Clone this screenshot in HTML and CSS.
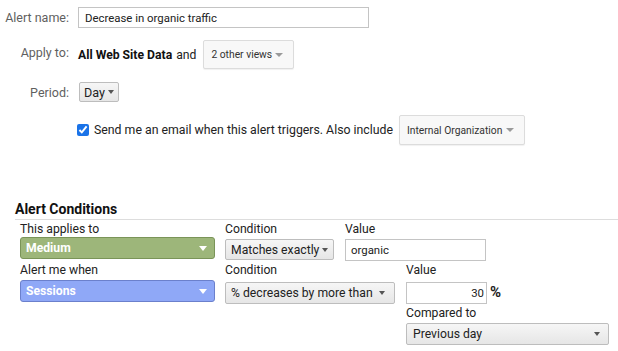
FILE: index.html
```html
<!DOCTYPE html>
<html>
<head>
<meta charset="utf-8">
<link rel="stylesheet" href="styles.css">
</head>
<body>
<div class="top">
  <div class="row r1">
    <div class="lbl">Alert name:</div>
    <div class="txt-input name-input">Decrease in organic traffic</div>
  </div>
  <div class="row r2">
    <div class="lbl">Apply to:</div>
    <span class="strong">All Web Site Data</span><span class="and">and</span>
    <div class="soft-select views"><span>2 other views</span><span class="soft-arrow"></span></div>
  </div>
  <div class="row r3">
    <div class="lbl">Period:</div>
    <div class="btn-select day"><span>Day</span><span class="dark-arrow"></span></div>
  </div>
  <div class="row r4">
    <div class="lbl"></div>
    <input type="checkbox" class="chk" checked>
    <span class="email">Send me an email when this alert triggers. Also include</span>
    <div class="soft-select org"><span>Internal Organization</span><span class="soft-arrow"></span></div>
  </div>
</div>

<div class="cond">
  <div class="cond-title">Alert Conditions</div>
  <div class="cond-row ra">
    <div class="col c1">
      <div class="clbl">This applies to</div>
      <div class="color-select green"><span>Medium</span><span class="white-arrow"></span></div>
    </div>
    <div class="col c2a">
      <div class="clbl">Condition</div>
      <div class="btn-select cbtn"><span>Matches exactly</span><span class="dark-arrow"></span></div>
    </div>
    <div class="col c3a">
      <div class="clbl">Value</div>
      <div class="txt-input val">organic</div>
    </div>
  </div>
  <div class="cond-row rb">
    <div class="col c1">
      <div class="clbl">Alert me when</div>
      <div class="color-select blue"><span>Sessions</span><span class="white-arrow"></span></div>
    </div>
    <div class="col c2b">
      <div class="clbl">Condition</div>
      <div class="btn-select cbtn wide"><span>% decreases by more than</span><span class="dark-arrow"></span></div>
    </div>
    <div class="col c3b">
      <div class="clbl">Value</div>
      <div class="pct-line"><div class="txt-input num">30</div><span class="pct">%</span></div>
      <div class="clbl cmp">Compared to</div>
      <div class="btn-select prev"><span>Previous day</span><span class="dark-arrow"></span></div>
    </div>
  </div>
</div>
</body>
</html>
```

FILE: styles.css
```css
* { box-sizing: border-box; }
body {
  margin: 0;
  font-family: Roboto, "Liberation Sans", Arial, sans-serif;
  font-size: 12.2px;
  color: #222;
  background: #fff;
  width: 618px;
  height: 351px;
  overflow: hidden;
  white-space: nowrap;
}
.top { padding-top: 7px; }
.row { display: flex; align-items: center; }
.lbl {
  width: 70px;
  padding-right: 1px;
  margin-right: 8px;
  text-align: right;
  color: #5f5f5f;
  font-size: 12.5px;
  flex: none;
}
.r1 { height: 21px; }
.r2 { height: 29px; margin-top: 12px; }
.r2 .lbl { margin-top: -4px; }
.r3 { height: 20px; margin-top: 13px; }
.r4 { height: 30px; margin-top: 13px; }
.r4 .lbl { margin-right: 7px; }

.txt-input {
  border: 1px solid #c4c4c4;
  background: #fff;
  display: flex;
  align-items: center;
  font-size: 11.4px;
  color: #222;
}
.name-input { width: 291px; height: 21px; padding-left: 6px; }

.strong { font-weight: bold; color: #111; font-size: 12.2px; }
.and { margin-left: 4px; margin-right: 7px; color: #222; font-size: 12.2px; }

.soft-select {
  display: flex;
  align-items: center;
  justify-content: space-between;
  background: #f8f8f8;
  border: 1px solid #dcdcdc;
  border-radius: 2px;
  box-shadow: 0 1px 1px rgba(0,0,0,0.06);
  font-size: 10.3px;
  color: #333;
  padding: 0 10px 0 7px;
}
.views { width: 91px; height: 29px; }
.org { width: 126px; height: 30px; margin-left: 6px; }
.soft-arrow {
  width: 0; height: 0;
  border-left: 4px solid transparent;
  border-right: 4px solid transparent;
  border-top: 4px solid #9a9a9a;
}

.btn-select {
  display: flex;
  align-items: center;
  justify-content: space-between;
  background: linear-gradient(#f6f6f6, #e6e6e6);
  border: 1px solid #bdbdbd;
  border-radius: 2px;
  color: #222;
  font-size: 12.2px;
  padding: 0 5px 0 5px;
}
.day { width: 40px; height: 20px; margin-left: 1px; font-size: 12.6px; padding-left: 4px; }
.dark-arrow {
  width: 0; height: 0;
  border-left: 3.5px solid transparent;
  border-right: 3.5px solid transparent;
  border-top: 4px solid #555;
  margin-left: 3px;
}

.chk {
  margin: 0;
  width: 12px; height: 12px;
  accent-color: #1a73e8;
  flex: none;
}
.email { margin-left: 5px; color: #222; font-size: 12.3px; }

.cond { margin-top: 54px; margin-left: 15px; }
.cond-title {
  font-weight: bold;
  font-size: 14px;
  color: #111;
  height: 21px;
  line-height: 20px;
  border-bottom: 1px solid #ddd;
}
.cond-row { display: flex; padding-left: 5px; }
.col { display: flex; flex-direction: column; flex: none; }
.clbl { color: #222; height: 16px; line-height: 16px; }
.ra .clbl { height: 16px; margin-top: 1px; }
.rb .c1 .clbl { height: 19px; line-height: 19px; }
.rb .c2b .clbl, .rb .c3b > .clbl:first-child { height: 21px; line-height: 19px; }

.c1 { width: 195px; }
.c2a { width: 109px; margin-left: 10px; }
.c3a { width: 141px; margin-left: 11px; }
.c2b { width: 170px; margin-left: 10px; }
.c3b { margin-left: 11px; }

.ra .c2a .btn-select, .ra .c3a .txt-input { margin-top: 2px; }

.color-select {
  display: flex;
  align-items: center;
  justify-content: space-between;
  height: 22px;
  border-radius: 3px;
  color: #fff;
  font-weight: bold;
  padding: 0 7px 0 5px;
}
.green { background: #9db67a; border: 1px solid #7a9458; }
.blue { background: #8fa8f7; border: 1px solid #6b80cc; }
.white-arrow {
  width: 0; height: 0;
  border-left: 4.5px solid transparent;
  border-right: 4.5px solid transparent;
  border-top: 5px solid #fff;
}
.cbtn { height: 21px; }
.wide { height: 22px; padding-right: 9px; }
.val { width: 141px; height: 22px; padding-left: 5px; }
.pct-line { display: flex; align-items: center; }
.num { width: 81px; height: 22px; justify-content: flex-end; padding-right: 2px; }
.pct { margin-left: 3px; font-size: 15px; font-weight: bold; color: #222; margin-top: -3px; }
.cmp { margin-top: 2px; height: 15px; line-height: 15px; }
.prev { width: 203px; height: 22px; margin-top: 2px; padding: 0 8px 0 6px; }
```
